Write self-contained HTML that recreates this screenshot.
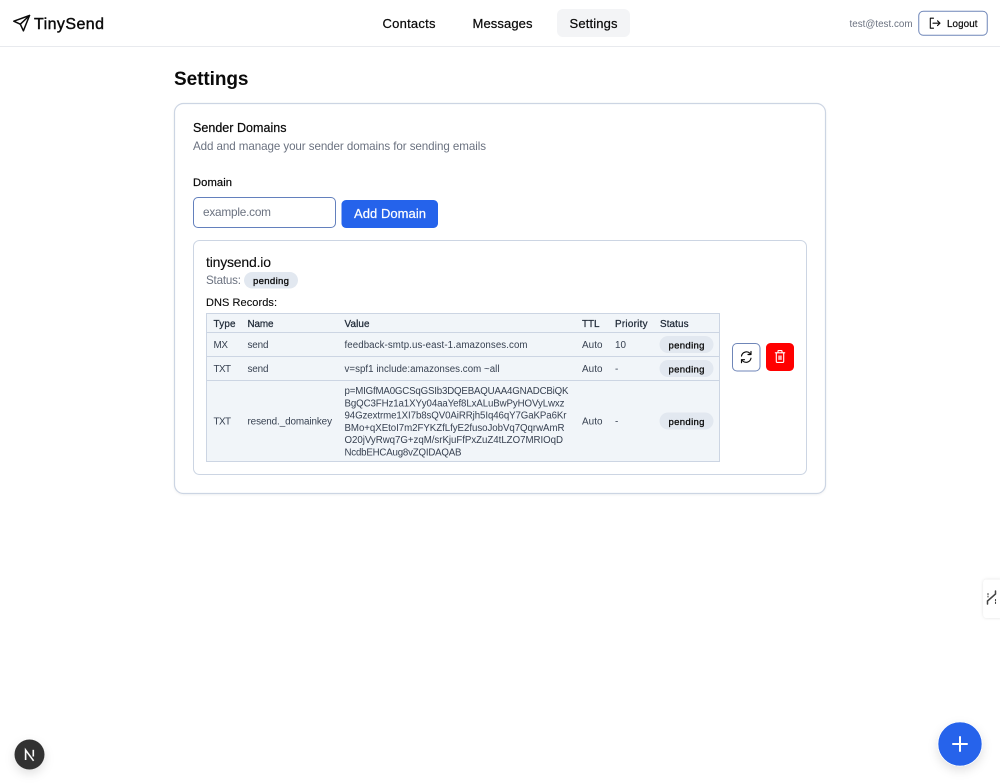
<!DOCTYPE html>
<html lang="en"><head><meta charset="utf-8"><title>TinySend - Settings</title>
<style>
html,body{margin:0;padding:0;background:#fff;width:1000px;height:784px;overflow:hidden}
svg{display:block;position:absolute;left:0;top:0}
text{font-family:"Liberation Sans",sans-serif;fill:#0a0a0a}
.m{stroke:#0a0a0a;stroke-width:.22px}
.g{fill:#6b7280}
.t{font-size:9.9px;fill:#374151}
.h{font-size:9.9px;stroke:#1f2937;stroke-width:.25px;fill:#1f2937}
.p{font-size:9.6px;stroke:#0a0a0a;stroke-width:.3px}
.v{font-size:9.7px;fill:#374151}
</style></head><body>
<svg width="1000" height="784" viewBox="0 0 1000 784" xmlns="http://www.w3.org/2000/svg">
<defs>
<filter id="s" x="-5%" y="-5%" width="110%" height="110%"><feDropShadow dx="0" dy="1" stdDeviation="1" flood-color="#000" flood-opacity=".05"/></filter>
<filter id="f" x="-50%" y="-50%" width="200%" height="200%"><feDropShadow dx="0" dy="4" stdDeviation="5" flood-color="#000" flood-opacity=".12"/></filter>
<filter id="e" x="-50%" y="-20%" width="200%" height="140%"><feDropShadow dx="0" dy="0" stdDeviation="1.5" flood-color="#000" flood-opacity=".12"/></filter>
</defs>
<rect width="1000" height="784" fill="#fff"/>

<!-- header -->
<rect x="0" y="46" width="1000" height="1" fill="#e8eaee"/>
<g fill="none" stroke="#0a0a0a" stroke-width="1.5" stroke-linejoin="round" stroke-linecap="round">
<path d="M29.5 15.5 L13.8 21.2 L20.3 24.2 L23.4 30.8 Z"/><path d="M29.5 15.5 L20.3 24.2"/>
</g>
<text x="34" y="29" font-size="16" class="m" style="stroke-width:.4px" textLength="70">TinySend</text>

<rect x="557" y="9" width="73" height="28" rx="6" fill="#f3f4f6"/>
<text x="382.5" y="28" font-size="13" class="m" textLength="53">Contacts</text>
<text x="472.5" y="28" font-size="13" class="m" textLength="60">Messages</text>
<text x="569.5" y="28" font-size="13" class="m" textLength="48">Settings</text>

<text x="849.5" y="27" font-size="9.8" class="g" textLength="63">test@test.com</text>
<rect x="918.75" y="11.25" width="68.5" height="24" rx="4.5" fill="#fff" stroke="#6f86b8" stroke-width="1"/>
<g fill="none" stroke="#0a0a0a" stroke-width="1.1" stroke-linecap="round" stroke-linejoin="round">
<path d="M933.5 18.2 H930.3 V28.2 H933.5"/><path d="M933 23.2 H939.8"/><path d="M937.5 20.8 L939.9 23.2 L937.5 25.6"/>
</g>
<text x="947" y="27" font-size="9.8" class="m" textLength="30.5">Logout</text>

<!-- title -->
<text x="174" y="85" font-size="19" font-weight="700" textLength="74.5">Settings</text>

<!-- card -->
<rect x="174.5" y="103.5" width="651" height="390" rx="9" fill="#fff" stroke="#ccd5e3" stroke-width="1.2" filter="url(#s)"/>
<text x="193" y="132" font-size="12.5" class="m" textLength="93.5">Sender Domains</text>
<text x="193" y="150" font-size="11.6" class="g" textLength="293">Add and manage your sender domains for sending emails</text>
<text x="193" y="186" font-size="11.2" class="m" textLength="39">Domain</text>

<rect x="193.5" y="197.5" width="142" height="30" rx="4.5" fill="#fff" stroke="#6380bd" stroke-width="1"/>
<text x="203" y="216" font-size="11.8" style="fill:#6b7280" textLength="68">example.com</text>
<rect x="341.5" y="200" width="96.5" height="28" rx="4.5" fill="#2563eb"/>
<text x="354" y="218" font-size="13" style="fill:#fff;stroke:#fff;stroke-width:.2px" textLength="72">Add Domain</text>

<!-- domain card -->
<rect x="193.5" y="240.5" width="613" height="234" rx="6" fill="#fff" stroke="#ccd5e3" stroke-width="1"/>
<text x="206" y="267" font-size="14" class="m" style="stroke-width:.12px" textLength="65">tinysend.io</text>
<text x="206" y="284" font-size="11.6" class="g" textLength="35">Status:</text>
<rect x="244" y="272" width="54" height="16.5" rx="8.25" fill="#e2e8f0"/>
<text x="253" y="284" class="p" textLength="36">pending</text>
<text x="206" y="306" font-size="11" class="m" style="stroke-width:.12px" textLength="71">DNS Records:</text>

<!-- table -->
<rect x="206.5" y="313.5" width="513" height="148" fill="#f1f5f9" stroke="#ccd5e3" stroke-width="1"/>
<rect x="207" y="332" width="512" height="1" fill="#ccd5e3"/>
<rect x="207" y="356" width="512" height="1" fill="#ccd5e3"/>
<rect x="207" y="380" width="512" height="1" fill="#ccd5e3"/>

<text x="213.5" y="327" class="h" textLength="22">Type</text>
<text x="247.5" y="327" class="h" textLength="26">Name</text>
<text x="344.5" y="327" class="h" textLength="25">Value</text>
<text x="582" y="327" class="h" textLength="17.5">TTL</text>
<text x="615" y="327" class="h" textLength="32.5">Priority</text>
<text x="660" y="327" class="h" textLength="28.5">Status</text>

<text x="213.5" y="348" class="t" textLength="14.5">MX</text>
<text x="247.5" y="348" class="t" textLength="21">send</text>
<text x="344.5" y="348" class="v" textLength="183">feedback-smtp.us-east-1.amazonses.com</text>
<text x="582" y="348" class="t" textLength="20.5">Auto</text>
<text x="615" y="348" class="t">10</text>

<text x="213.5" y="372" class="t" textLength="17.5">TXT</text>
<text x="247.5" y="372" class="t" textLength="21">send</text>
<text x="344.5" y="372" class="v" textLength="155">v=spf1 include:amazonses.com ~all</text>
<text x="582" y="372" class="t" textLength="20.5">Auto</text>
<text x="615" y="372" class="t">-</text>

<text x="213.5" y="424.5" class="t" textLength="17.5">TXT</text>
<text x="247.5" y="424.5" class="t" textLength="84.5">resend._domainkey</text>
<text x="344.5" y="394" class="v" textLength="224">p=MIGfMA0GCSqGSIb3DQEBAQUAA4GNADCBiQK</text>
<text x="344.5" y="406.3" class="v" textLength="220">BgQC3FHz1a1XYy04aaYef8LxALuBwPyHOVyLwxz</text>
<text x="344.5" y="418.6" class="v" textLength="222">94Gzextrme1XI7b8sQV0AiRRjh5Iq46qY7GaKPa6Kr</text>
<text x="344.5" y="430.9" class="v" textLength="220">BMo+qXEtoI7m2FYKZfLfyE2fusoJobVq7QqrwAmR</text>
<text x="344.5" y="443.2" class="v" textLength="218.5">O20jVyRwq7G+zqM/srKjuFfPxZuZ4tLZO7MRIOqD</text>
<text x="344.5" y="455.5" class="v" textLength="117">NcdbEHCAug8vZQIDAQAB</text>
<text x="582" y="424.5" class="t" textLength="20.5">Auto</text>
<text x="615" y="424.5" class="t">-</text>

<rect x="659.5" y="336" width="54" height="17" rx="8.5" fill="#e2e8f0"/>
<text x="668.5" y="348.3" class="p" textLength="36">pending</text>
<rect x="659.5" y="360" width="54" height="17" rx="8.5" fill="#e2e8f0"/>
<text x="668.5" y="372.3" class="p" textLength="36">pending</text>
<rect x="659.5" y="412.5" width="54" height="17" rx="8.5" fill="#e2e8f0"/>
<text x="668.5" y="424.8" class="p" textLength="36">pending</text>

<!-- action buttons -->
<rect x="732.5" y="343.5" width="27.5" height="27.5" rx="4.5" fill="#fff" stroke="#6f86b8" stroke-width="1"/>
<g fill="none" stroke="#0a0a0a" stroke-width="1.15" stroke-linecap="round" stroke-linejoin="round">
<path d="M741.5 356 A5 5 0 0 1 749.8 353.2 L751 354.3"/><path d="M751 351.5 V354.5 H748"/>
<path d="M751 358.2 A5 5 0 0 1 742.7 361 L741.5 359.9"/><path d="M741.5 362.7 V359.7 H744.5"/>
</g>
<rect x="766" y="343" width="28" height="28" rx="4.5" fill="#ff0000"/>
<g fill="none" stroke="#fff" stroke-width="1.1" stroke-linecap="round" stroke-linejoin="round">
<path d="M775.3 352.8 H784.7"/><path d="M776.3 352.8 V361.5 Q776.3 362.4 777.2 362.4 H782.8 Q783.7 362.4 783.7 361.5 V352.8"/><path d="M778 352.6 V351 Q778 350.6 778.5 350.6 H781.5 Q782 350.6 782 351 V352.6"/>
</g>
<rect x="778.2" y="355.5" width="3.6" height="4.4" fill="#ffb3b3"/>

<!-- side tab -->
<path d="M1002 579.5 H987 Q983.2 579.5 983.2 583.5 V614 Q983.2 618 987 618 H1002 Z" fill="#fff" filter="url(#e)"/>
<g fill="none" stroke="#444" stroke-width="1.5" stroke-linecap="round">
<path d="M987.5 604 V601 L995.5 594 V591"/>
<path d="M988 593.5 V597" stroke-dasharray="1.2 1.6" stroke-width="1.1"/>
<path d="M995.5 599.5 V604" stroke-dasharray="1.2 1.6" stroke-width="1.1"/>
</g>

<!-- next badge -->
<circle cx="29.5" cy="754.5" r="15" fill="#333" filter="url(#f)"/>
<g fill="none" stroke="#fafafa" stroke-width="1.6">
<path d="M25.6 760 V750 L33.6 760.8"/><path d="M33.3 749.8 V756.5"/>
</g>

<!-- FAB -->
<circle cx="960" cy="744" r="22" fill="#2563eb" stroke="#fff" stroke-width=".6" filter="url(#f)"/>
<path d="M953 744 H967 M960 737 V751" fill="none" stroke="#fff" stroke-width="2" stroke-linecap="round"/>
</svg>
</body></html>
